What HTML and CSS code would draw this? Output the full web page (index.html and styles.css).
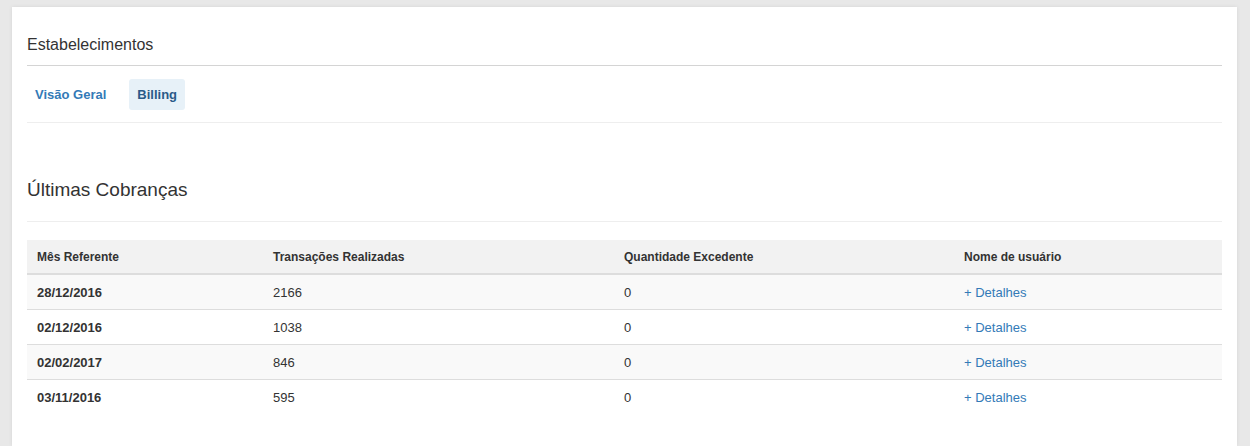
FILE: index.html
```html
<!DOCTYPE html>
<html lang="pt-BR">
<head>
  <meta charset="UTF-8">
  <meta name="viewport" content="width=device-width, initial-scale=1.0">
  <title>Estabelecimentos - Billing</title>
  <link rel="stylesheet" href="styles.css">
</head>
<body>

  <div class="panel">
    <h4 class="page-title">Estabelecimentos</h4>

    <ul class="nav-pills">
      <li><a href="#">Visão Geral</a></li>
      <li class="active"><a href="#">Billing</a></li>
    </ul>

    <h3 class="section-title">Últimas Cobranças</h3>

    <table class="billing-table">
      <thead>
        <tr>
          <th class="col-mes">Mês Referente</th>
          <th class="col-trx">Transações Realizadas</th>
          <th class="col-exc">Quantidade Excedente</th>
          <th class="col-user">Nome de usuário</th>
        </tr>
      </thead>
      <tbody>
        <tr>
          <td><b>28/12/2016</b></td>
          <td>2166</td>
          <td>0</td>
          <td><a href="#">+ Detalhes</a></td>
        </tr>
        <tr>
          <td><b>02/12/2016</b></td>
          <td>1038</td>
          <td>0</td>
          <td><a href="#">+ Detalhes</a></td>
        </tr>
        <tr>
          <td><b>02/02/2017</b></td>
          <td>846</td>
          <td>0</td>
          <td><a href="#">+ Detalhes</a></td>
        </tr>
        <tr>
          <td><b>03/11/2016</b></td>
          <td>595</td>
          <td>0</td>
          <td><a href="#">+ Detalhes</a></td>
        </tr>
      </tbody>
    </table>
  </div>

</body>
</html>
```

FILE: styles.css
```css
body {
  font-family: 'Liberation Sans', Arial, sans-serif;
  font-size: 13px;
  color: #333;
  background: #e8e8e8;
  margin: 0;
  padding: 7px 13px 0 12px;
}

a {
  color: #337ab7;
  text-decoration: none;
}

.panel {
  background: #fff;
  padding: 29px 15px 32px;
  box-shadow: 0 0 4px rgba(0,0,0,0.08);
}

.page-title {
  font-size: 16px;
  font-weight: normal;
  color: #333;
  margin: 0;
  padding-bottom: 11px;
  border-bottom: 1px solid #d4d4d4;
}

.nav-pills {
  list-style: none;
  display: flex;
  gap: 15px;
  margin: 0;
  padding: 13px 0 12px;
  border-bottom: 1px solid #eee;
}

.nav-pills a {
  display: block;
  padding: 0 8px;
  line-height: 31px;
  font-weight: bold;
  border-radius: 3px;
}

.nav-pills .active a {
  background: #e7f1f8;
  color: #2a5a88;
}

.section-title {
  font-size: 19px;
  font-weight: normal;
  color: #333;
  margin: 0;
  padding: 56px 0 20px;
  border-bottom: 1px solid #eee;
}

.billing-table {
  width: 100%;
  border-collapse: collapse;
  margin-top: 18px;
  table-layout: fixed;
}

.billing-table th {
  text-align: left;
  font-size: 12px;
  background: #f2f2f2;
  height: 33px;
  padding: 0 10px;
  border-bottom: 2px solid #ddd;
}

.billing-table td {
  height: 34px;
  padding: 0 10px;
  border-top: 1px solid #ddd;
}

.billing-table tbody tr:first-child td {
  border-top: none;
}

.billing-table tbody tr:nth-child(odd) {
  background: #f9f9f9;
}

.col-mes { width: 216px; }
.col-trx { width: 331px; }
.col-exc { width: 320px; }
```
